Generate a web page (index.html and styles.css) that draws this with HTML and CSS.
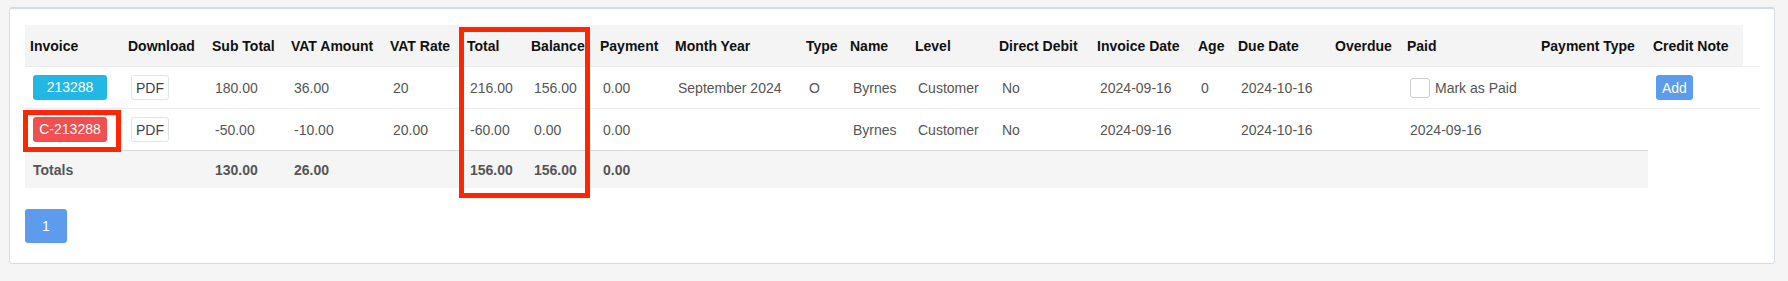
FILE: index.html
```html
<!DOCTYPE html>
<html>
<head>
    <title>Invoices</title>
    <link rel="stylesheet" href="styles.css">
</head>
<body>
    <div class="panel">
        <table class="invoices">
            <colgroup>
                <col style="width:98px"><col style="width:84px"><col style="width:79px"><col style="width:99px">
                <col style="width:77px"><col style="width:64px"><col style="width:69px"><col style="width:75px">
                <col style="width:131px"><col style="width:44px"><col style="width:65px"><col style="width:84px">
                <col style="width:98px"><col style="width:101px"><col style="width:40px"><col style="width:97px">
                <col style="width:72px"><col style="width:134px"><col style="width:112px"><col style="width:95px">
                <col style="width:17px">
            </colgroup>
            <thead>
                <tr>
                    <th>Invoice</th>
                    <th>Download</th>
                    <th>Sub Total</th>
                    <th>VAT Amount</th>
                    <th>VAT Rate</th>
                    <th>Total</th>
                    <th>Balance</th>
                    <th>Payment</th>
                    <th>Month Year</th>
                    <th>Type</th>
                    <th>Name</th>
                    <th>Level</th>
                    <th>Direct Debit</th>
                    <th>Invoice Date</th>
                    <th>Age</th>
                    <th>Due Date</th>
                    <th>Overdue</th>
                    <th>Paid</th>
                    <th>Payment Type</th>
                    <th>Credit Note</th>
                </tr>
            </thead>
            <tbody>
                <tr>
                    <td><span class="badge info">213288</span></td>
                    <td><span class="btn-pdf">PDF</span></td>
                    <td>180.00</td>
                    <td>36.00</td>
                    <td>20</td>
                    <td>216.00</td>
                    <td>156.00</td>
                    <td>0.00</td>
                    <td>September 2024</td>
                    <td>O</td>
                    <td>Byrnes</td>
                    <td>Customer</td>
                    <td>No</td>
                    <td>2024-09-16</td>
                    <td>0</td>
                    <td>2024-10-16</td>
                    <td></td>
                    <td><label class="mark"><span class="check"></span>Mark as Paid</label></td>
                    <td></td>
                    <td><span class="btn-add">Add</span></td>
                    <td></td>
                </tr>
                <tr>
                    <td><span class="badge danger">C-213288</span></td>
                    <td><span class="btn-pdf">PDF</span></td>
                    <td>-50.00</td>
                    <td>-10.00</td>
                    <td>20.00</td>
                    <td>-60.00</td>
                    <td>0.00</td>
                    <td>0.00</td>
                    <td></td>
                    <td></td>
                    <td>Byrnes</td>
                    <td>Customer</td>
                    <td>No</td>
                    <td>2024-09-16</td>
                    <td></td>
                    <td>2024-10-16</td>
                    <td></td>
                    <td>2024-09-16</td>
                    <td></td>
                    <td></td>
                    <td></td>
                </tr>
                <tr class="totals">
                    <td>Totals</td>
                    <td></td>
                    <td>130.00</td>
                    <td>26.00</td>
                    <td></td>
                    <td>156.00</td>
                    <td>156.00</td>
                    <td>0.00</td>
                    <td></td><td></td><td></td><td></td><td></td><td></td>
                    <td></td><td></td><td></td><td></td><td></td>
                </tr>
            </tbody>
        </table>

        <div class="pagination">
            <span class="page active">1</span>
        </div>

        <div class="highlight hl-credit"></div>
        <div class="highlight hl-total"></div>
    </div>
</body>
</html>
```

FILE: styles.css
```css
body { margin: 0; background: #f5f5f5; font-family: "Liberation Sans", Arial, sans-serif; font-size: 14px; color: #555; }
.panel { position: relative; margin: 7px 13px 0 9px; padding: 16px 15px 20px; background: #fff; border: 1px solid #d3dce3; border-top-width: 2px; border-radius: 3px; }

.invoices { table-layout: fixed; width: 1735px; border-collapse: separate; border-spacing: 0; }
.invoices th { background: #f4f4f4; color: #111; font-weight: bold; text-align: left; padding: 11px 5px 9px; line-height: 21px; white-space: nowrap; }
.invoices td { padding: 8px; line-height: 20px; border-top: 1px solid #ebebeb; white-space: nowrap; vertical-align: middle; }
.invoices .totals td { background: #f5f5f5; font-weight: bold; border-top-color: #d9d9d9; padding: 9px 8px 8px; }

.badge { display: inline-block; width: 74px; padding: 2px 0 3px; border-radius: 3px; color: #fff; text-align: center; line-height: 20px; }
.info { background: #23b7e5; }
.danger { background: #f05050; }

.btn-pdf { display: inline-block; padding: 3px 4px 2px; border: 1px solid #dee5e7; border-radius: 3px; color: #3a3f51; line-height: 18px; }
.btn-add { display: inline-block; padding: 3px 6px 2px; border-radius: 3px; background: #5d9cec; color: #fff; line-height: 20px; }

.mark { display: inline-flex; align-items: center; gap: 5px; vertical-align: middle; line-height: 20px; }
.check { width: 18px; height: 18px; border: 1px solid #cfcfcf; border-radius: 3px; background: #fff; }

.pagination { margin-top: 21px; }
.page { display: inline-block; width: 42px; height: 34px; line-height: 34px; text-align: center; border-radius: 3px; background: #5d9cec; color: #fff; }

.highlight { position: absolute; border: 5px solid #ff2600; box-sizing: border-box; }
.hl-credit { left: 13px; top: 101px; width: 98px; height: 42px; }
.hl-total { left: 449px; top: 18px; width: 131px; height: 171px; }
```
